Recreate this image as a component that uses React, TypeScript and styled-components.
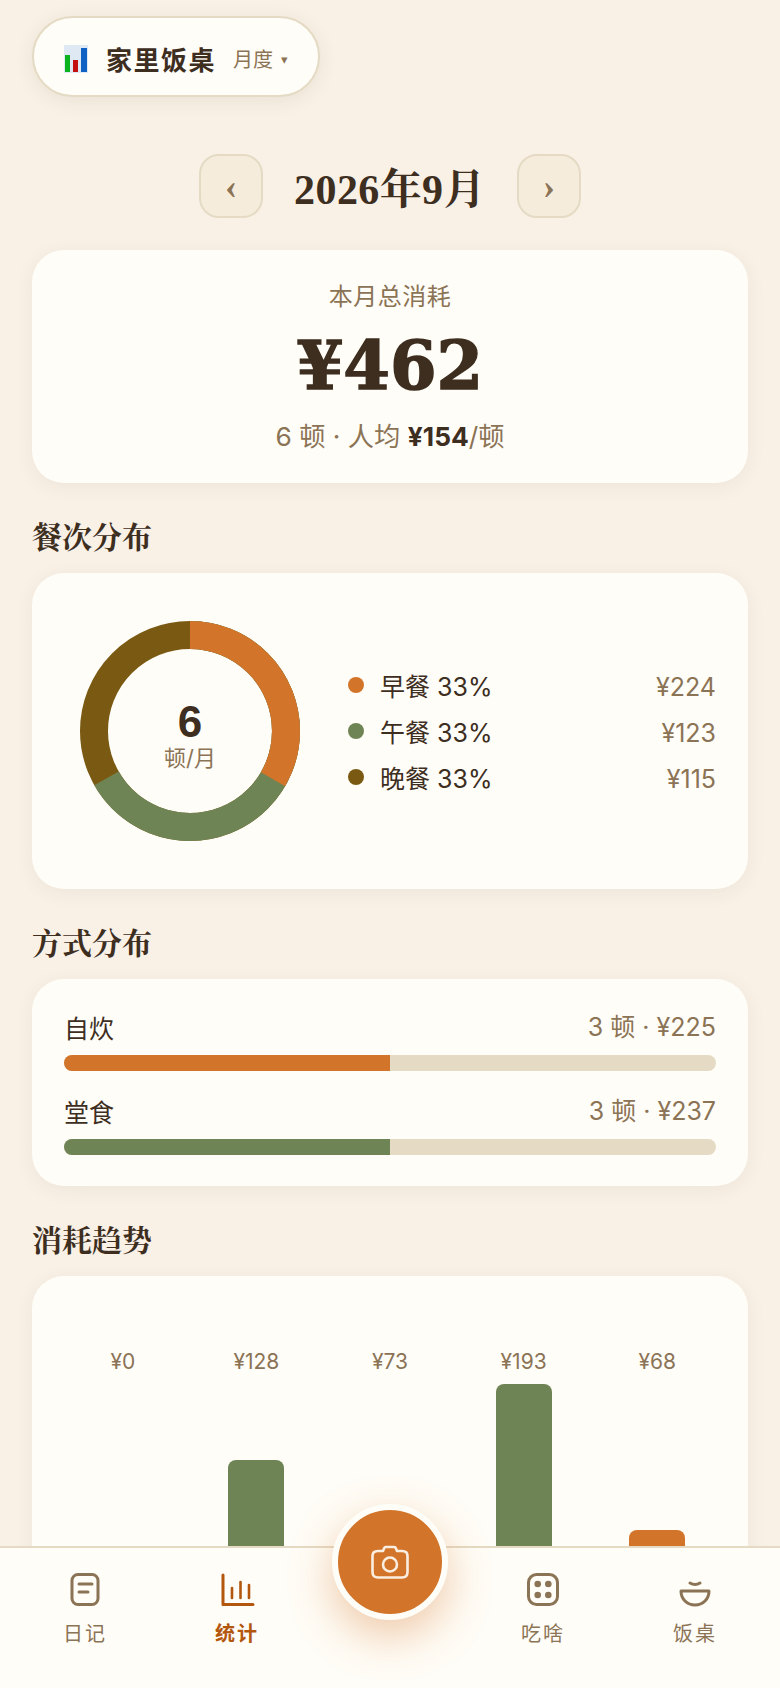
import React from 'react';
import styled, { createGlobalStyle } from 'styled-components';

const SANS = `Inter, "Noto Sans CJK SC", sans-serif`;
const SERIF = `"Liberation Serif", "Noto Serif CJK SC", "Noto Sans CJK SC", serif`;

const GlobalStyle = createGlobalStyle`
  html, body {
    margin: 0;
    padding: 0;
    background: #f9f1e6;
  }
  * {
    box-sizing: border-box;
  }
`;

const Page = styled.div`
  width: 780px;
  height: 1688px;
  overflow: hidden;
  position: relative;
  padding: 16px 32px 0;
  background: #f9f1e6;
  color: #3d2e1f;
  font-family: ${SANS};
`;

const Switcher = styled.div`
  display: inline-flex;
  align-items: center;
  height: 81px;
  width: 288px;
  padding: 4px 0 0 30px;
  background: #fffdf7;
  border: 2px solid #e5dac4;
  border-radius: 41px;
  box-shadow: 0 4px 20px rgba(61, 46, 31, 0.08);

  svg {
    flex: none;
  }
`;

const AppName = styled.span`
  margin-left: 18px;
  font-size: 26px;
  font-weight: 700;
  letter-spacing: 1.5px;
  white-space: nowrap;
`;

const Period = styled.span`
  margin-left: 17px;
  font-size: 20px;
  color: #8b7355;
  white-space: nowrap;
`;

const Caret = styled.span`
  margin-left: 8px;
  font-size: 13px;
  color: #8b7355;
`;

const MonthNav = styled.div`
  display: flex;
  align-items: center;
  justify-content: center;
  margin-top: 57px;
  gap: 30px;
`;

const NavButton = styled.button`
  width: 64px;
  height: 64px;
  padding: 0;
  border: 2px solid #e5dac4;
  border-radius: 20px;
  background: #f5ecdc;
  color: #8b7355;
  font-family: "Liberation Serif", serif;
  font-size: 36px;
  font-weight: 700;
  line-height: 1;
`;

const MonthTitle = styled.h1`
  margin: 0;
  width: 194px;
  text-align: center;
  font-family: ${SERIF};
  font-size: 42px;
  font-weight: 700;
  letter-spacing: 0.4px;
  white-space: nowrap;
`;

const Card = styled.section`
  background: #fffdf7;
  border-radius: 32px;
  box-shadow: 0 4px 20px rgba(61, 46, 31, 0.06);
`;

const TotalCard = styled(Card)`
  margin-top: 32px;
  height: 233px;
  padding-top: 30px;
  text-align: center;
`;

const TotalLabel = styled.div`
  font-size: 24px;
  letter-spacing: 0.5px;
  line-height: 34px;
  color: #8b7355;
`;

const TotalValue = styled.div`
  margin-top: 12px;
  font-family: "DejaVu Serif", serif;
  font-size: 67px;
  font-weight: 700;
  line-height: 80px;
  -webkit-text-stroke: 1.5px #3d2e1f;
`;

const TotalMeta = styled.div`
  margin-top: 13px;
  font-size: 26.3px;
  line-height: 36px;
  color: #8b7355;

  strong {
    color: #3d2e1f;
    font-weight: 700;
  }
`;

const SectionTitle = styled.h2`
  margin: 33px 0 0;
  height: 57px;
  font-family: ${SERIF};
  font-size: 30px;
  font-weight: 700;
  line-height: 44px;
`;

const DonutCard = styled(Card)`
  height: 316px;
  display: flex;
  align-items: center;
  padding: 0 32px 0 48px;
`;

const DonutWrap = styled.div`
  position: relative;
  flex: none;
  width: 220px;
  height: 220px;
`;

const DonutCenter = styled.div`
  position: absolute;
  inset: 0;
  padding-top: 10px;
  display: flex;
  flex-direction: column;
  align-items: center;
  justify-content: center;
`;

const DonutCount = styled.div`
  font-family: "Liberation Sans", sans-serif;
  font-size: 44px;
  font-weight: 700;
  line-height: 44px;
`;

const DonutUnit = styled.div`
  font-size: 22px;
  line-height: 28px;
  color: #8b7355;
`;

const Legend = styled.div`
  flex: 1;
  margin-left: 48px;
  display: flex;
  flex-direction: column;
  gap: 10px;
`;

const LegendRow = styled.div`
  display: flex;
  align-items: center;
  height: 36px;
`;

const Dot = styled.span<{ $color: string }>`
  width: 16px;
  height: 16px;
  border-radius: 50%;
  background: ${(p) => p.$color};
`;

const LegendName = styled.span`
  margin-left: 16px;
  font-size: 25px;
  flex: 1;
`;

const Amount = styled.span`
  font-size: 25px;
  color: #8b7355;
`;

const LegendAmount = styled(Amount)`
  padding-top: 3px;
`;

const MethodCard = styled(Card)`
  height: 207px;
  padding: 26px 32px 0;
  display: flex;
  flex-direction: column;
  gap: 18px;
`;

const MethodRow = styled.div`
  display: flex;
  flex-direction: column;
`;

const MethodHead = styled.div`
  display: flex;
  justify-content: space-between;
  align-items: center;
  height: 40px;
  margin-bottom: 10px;
`;

const MethodName = styled.span`
  padding-top: 3px;
  font-size: 25px;
`;

const Track = styled.div`
  height: 16px;
  border-radius: 8px;
  background: #e5dac4;
  overflow: hidden;
`;

const Fill = styled.div<{ $color: string }>`
  height: 100%;
  background: ${(p) => p.$color};
`;

const ChartCard = styled(Card)`
  height: 420px;
  padding: 70px 32px 0;
  display: grid;
  grid-template-columns: repeat(5, 1fr);
  gap: 16px;
`;

const BarColumn = styled.div`
  display: flex;
  flex-direction: column;
  align-items: center;
`;

const BarValue = styled.div`
  font-size: 21px;
  line-height: 32px;
  color: #8b7355;
`;

const BarSlot = styled.div`
  height: 232px;
  display: flex;
  align-items: flex-end;
`;

const Bar = styled.div<{ $color: string }>`
  width: 56px;
  background: ${(p) => p.$color};
  border-radius: 8px 8px 0 0;
`;

const TabBar = styled.nav`
  position: absolute;
  left: 0;
  right: 0;
  bottom: 0;
  height: 142px;
  display: grid;
  grid-template-columns: 152px 152px 1fr 152px 152px;
  padding: 25px 9px 0;
  background: #fffdf7;
  border-top: 2px solid #e5dac4;
`;

const Tab = styled.div<{ $active?: boolean }>`
  display: flex;
  flex-direction: column;
  align-items: center;
  gap: 10px;
  font-size: 20px;
  line-height: 30px;
  letter-spacing: 2px;
  font-weight: ${(p) => (p.$active ? 700 : 400)};
  color: ${(p) => (p.$active ? '#b3570f' : '#8b7355')};
`;

const Fab = styled.button`
  position: absolute;
  left: 332px;
  top: -44px;
  width: 116px;
  height: 116px;
  border: 6px solid #fffdf7;
  border-radius: 50%;
  background: #d2752b;
  display: flex;
  align-items: center;
  justify-content: center;
  padding: 0;
  box-shadow: 0 16px 44px rgba(210, 117, 43, 0.38);
`;

const ChartEmoji = () => (
  <svg width="24" height="28" viewBox="0 0 24 28">
    <rect width="24" height="28" fill="#dfe9f3" />
    <rect x="1" y="10" width="5" height="17" fill="#0bb31f" />
    <rect x="9" y="15" width="5" height="12" fill="#c40f0f" />
    <rect x="17" y="3" width="6" height="24" fill="#0f62c4" />
  </svg>
);

const Donut = () => {
  const r = 96;
  const c = 2 * Math.PI * r;
  return (
    <svg width="220" height="220" viewBox="0 0 220 220">
      <g fill="none" strokeWidth="28" transform="rotate(-90 110 110)">
        <circle cx="110" cy="110" r={r} stroke="#7a5a12" />
        <circle cx="110" cy="110" r={r} stroke="#6f8454" strokeDasharray={`${(c * 2) / 3} ${c}`} />
        <circle cx="110" cy="110" r={r} stroke="#d2752b" strokeDasharray={`${c / 3} ${c}`} />
      </g>
    </svg>
  );
};

const CameraIcon = () => (
  <svg width="38" height="34" viewBox="0 0 38 34" fill="none" stroke="#fbeee0" strokeWidth="2.6" strokeLinejoin="round">
    <path d="M13 3.5Q13.5 2 15 2H23Q24.5 2 25 3.5L26 6H31Q36.5 6 36.5 11V27Q36.5 32.5 31 32.5H7Q1.5 32.5 1.5 27V11Q1.5 6 7 6H12Z" />
    <circle cx="19" cy="19.5" r="7" />
  </svg>
);

const DiaryIcon = () => (
  <svg width="36" height="36" viewBox="0 0 36 36" fill="none" stroke="currentColor" strokeWidth="3" strokeLinecap="round" strokeLinejoin="round">
    <rect x="5" y="1.5" width="26" height="30" rx="6" />
    <path d="M12 11h13" />
    <path d="M12 19h9" />
  </svg>
);

const StatsIcon = () => (
  <svg width="36" height="36" viewBox="0 0 36 36" fill="none" stroke="currentColor" strokeWidth="3" strokeLinecap="round" strokeLinejoin="round">
    <path d="M4 2v29.5h30" />
    <path d="M13 25V15" strokeWidth="2.6" />
    <path d="M21.5 25V9" strokeWidth="2.6" />
    <path d="M30 25V12" strokeWidth="2.6" />
  </svg>
);

const DiceIcon = () => (
  <svg width="36" height="36" viewBox="0 0 36 36" fill="none" stroke="currentColor" strokeWidth="3">
    <rect x="3.5" y="1.5" width="29" height="30" rx="8" />
    <g fill="currentColor" stroke="none">
      <circle cx="12.7" cy="11" r="3.3" />
      <circle cx="23.3" cy="11" r="3.3" />
      <circle cx="12.7" cy="22" r="3.3" />
      <circle cx="23.3" cy="22" r="3.3" />
    </g>
  </svg>
);

const BowlIcon = () => (
  <svg width="36" height="36" viewBox="0 0 36 36" fill="none" stroke="currentColor" strokeWidth="3" strokeLinecap="round" strokeLinejoin="round">
    <path d="M4 18h28c0 8-6 14-14 14S4 26 4 18z" />
    <path d="M13 10q5 3 10 0" />
  </svg>
);

const bars = [
  { value: 0, color: '#6f8454' },
  { value: 128, color: '#6f8454' },
  { value: 73, color: '#d2752b' },
  { value: 193, color: '#6f8454' },
  { value: 68, color: '#d2752b' },
];

export default function App() {
  return (
    <Page>
      <GlobalStyle />
      <Switcher>
        <ChartEmoji />
        <AppName>家里饭桌</AppName>
        <Period>月度</Period>
        <Caret>▾</Caret>
      </Switcher>

      <MonthNav>
        <NavButton>‹</NavButton>
        <MonthTitle>2026年9月</MonthTitle>
        <NavButton>›</NavButton>
      </MonthNav>

      <TotalCard>
        <TotalLabel>本月总消耗</TotalLabel>
        <TotalValue>¥462</TotalValue>
        <TotalMeta>
          6 顿 · 人均 <strong>¥154</strong>/顿
        </TotalMeta>
      </TotalCard>

      <SectionTitle>餐次分布</SectionTitle>
      <DonutCard>
        <DonutWrap>
          <Donut />
          <DonutCenter>
            <DonutCount>6</DonutCount>
            <DonutUnit>顿/月</DonutUnit>
          </DonutCenter>
        </DonutWrap>
        <Legend>
          <LegendRow>
            <Dot $color="#d2752b" />
            <LegendName>早餐 33%</LegendName>
            <LegendAmount>¥224</LegendAmount>
          </LegendRow>
          <LegendRow>
            <Dot $color="#6f8454" />
            <LegendName>午餐 33%</LegendName>
            <LegendAmount>¥123</LegendAmount>
          </LegendRow>
          <LegendRow>
            <Dot $color="#7a5a12" />
            <LegendName>晚餐 33%</LegendName>
            <LegendAmount>¥115</LegendAmount>
          </LegendRow>
        </Legend>
      </DonutCard>

      <SectionTitle>方式分布</SectionTitle>
      <MethodCard>
        <MethodRow>
          <MethodHead>
            <MethodName>自炊</MethodName>
            <Amount>3 顿 · ¥225</Amount>
          </MethodHead>
          <Track>
            <Fill $color="#d2752b" style={{ width: '50%' }} />
          </Track>
        </MethodRow>
        <MethodRow>
          <MethodHead>
            <MethodName>堂食</MethodName>
            <Amount>3 顿 · ¥237</Amount>
          </MethodHead>
          <Track>
            <Fill $color="#6f8454" style={{ width: '50%' }} />
          </Track>
        </MethodRow>
      </MethodCard>

      <SectionTitle>消耗趋势</SectionTitle>
      <ChartCard>
        {bars.map((b, i) => (
          <BarColumn key={i}>
            <BarValue>¥{b.value}</BarValue>
            <BarSlot>
              <Bar $color={b.color} style={{ height: b.value * 1.17 }} />
            </BarSlot>
          </BarColumn>
        ))}
      </ChartCard>

      <TabBar>
        <Tab>
          <DiaryIcon />
          日记
        </Tab>
        <Tab $active>
          <StatsIcon />
          统计
        </Tab>
        <div />
        <Tab>
          <DiceIcon />
          吃啥
        </Tab>
        <Tab>
          <BowlIcon />
          饭桌
        </Tab>
        <Fab>
          <CameraIcon />
        </Fab>
      </TabBar>
    </Page>
  );
}
